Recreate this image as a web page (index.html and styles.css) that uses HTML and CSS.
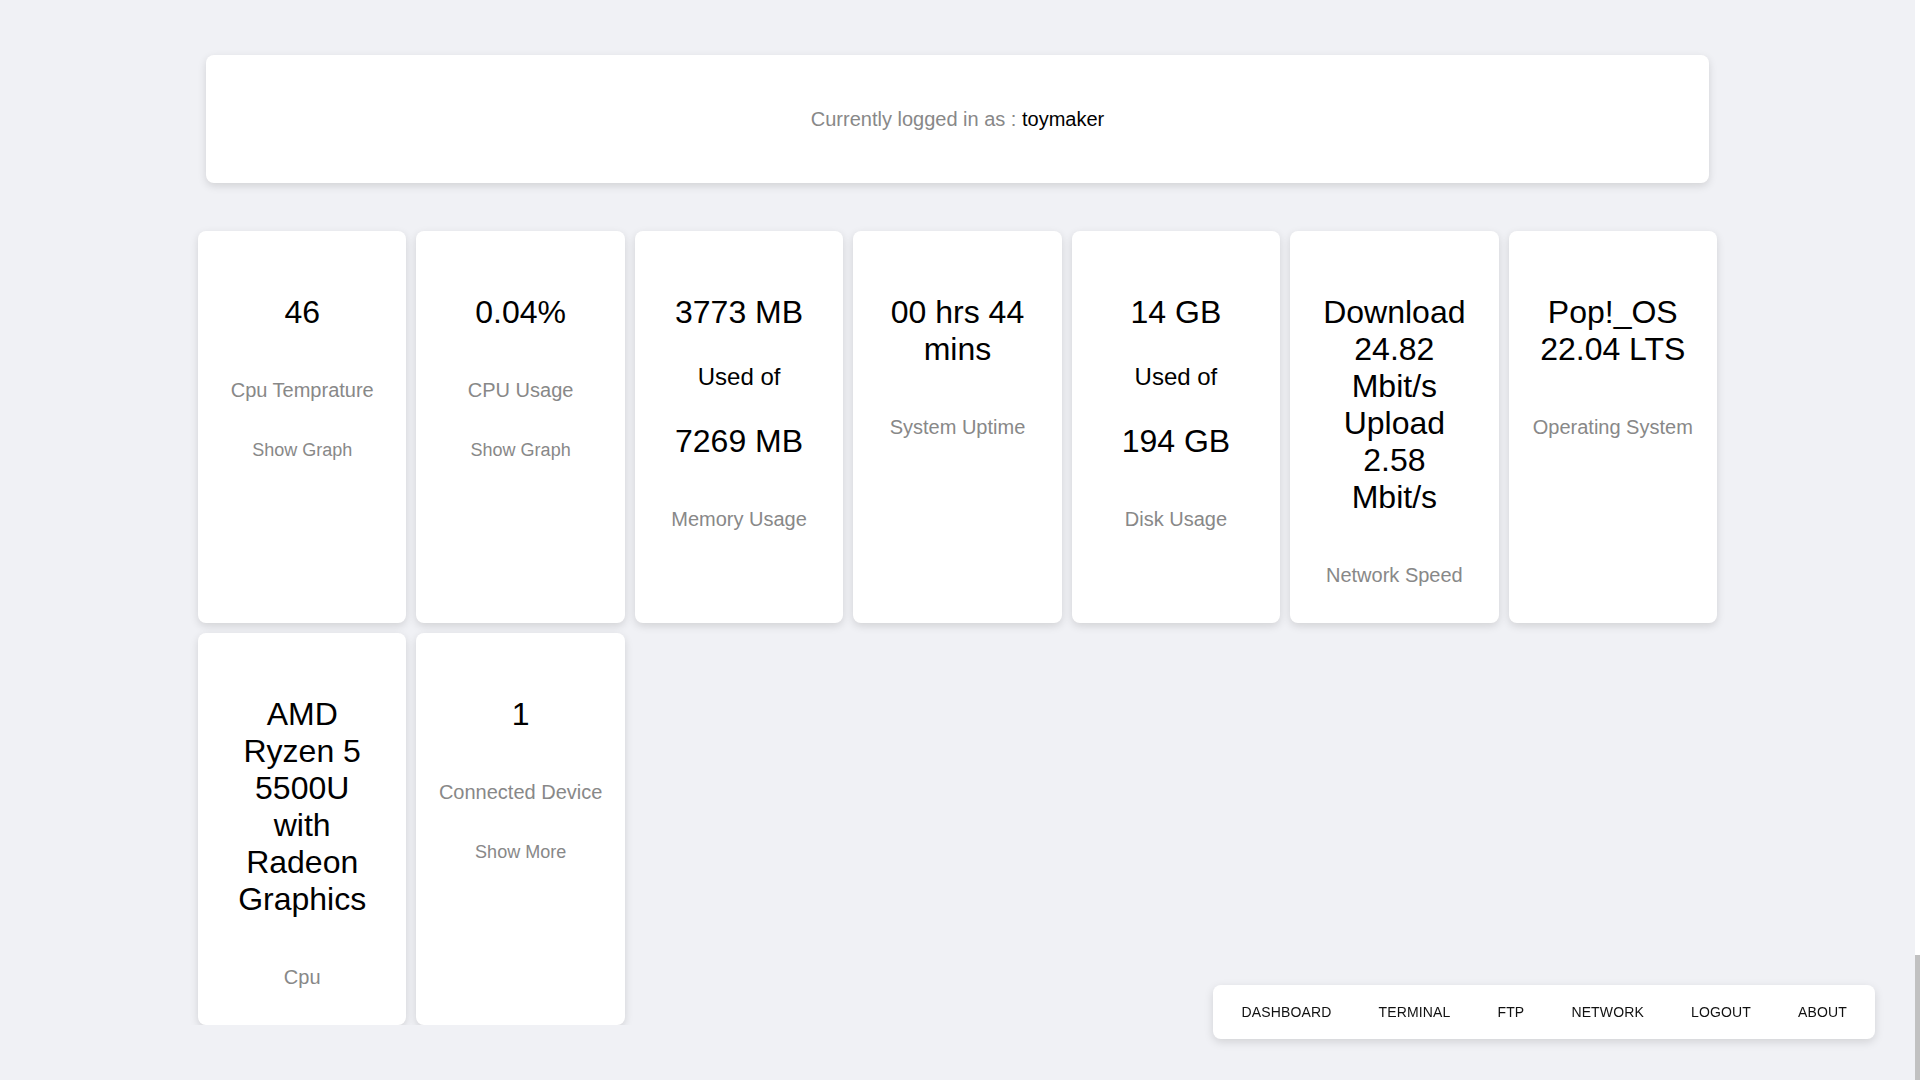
FILE: index.html
```html
<!DOCTYPE html>
<html lang="en">
<head>
<meta charset="utf-8">
<title>Dashboard</title>
<link rel="stylesheet" href="styles.css">
</head>
<body>
<div class="page">
  <div class="header-card">
    <span>Currently logged in as :&nbsp;</span><span class="user">toymaker</span>
  </div>

  <div class="grid">
    <div class="card">
      <div class="value">46</div>
      <div class="label">Cpu Temprature</div>
      <a class="link" href="#">Show Graph</a>
    </div>
    <div class="card">
      <div class="value">0.04%</div>
      <div class="label">CPU Usage</div>
      <a class="link" href="#">Show Graph</a>
    </div>
    <div class="card">
      <div class="value">3773 MB</div>
      <div class="sub">Used of</div>
      <div class="value">7269 MB</div>
      <div class="label">Memory Usage</div>
    </div>
    <div class="card">
      <div class="value">00 hrs 44 mins</div>
      <div class="label">System Uptime</div>
    </div>
    <div class="card">
      <div class="value">14 GB</div>
      <div class="sub">Used of</div>
      <div class="value">194 GB</div>
      <div class="label">Disk Usage</div>
    </div>
    <div class="card">
      <div class="value">Download 24.82 Mbit/s Upload 2.58 Mbit/s</div>
      <div class="label">Network Speed</div>
    </div>
    <div class="card">
      <div class="value">Pop!_OS 22.04 LTS</div>
      <div class="label">Operating System</div>
    </div>
    <div class="card">
      <div class="value">AMD Ryzen 5 5500U with Radeon Graphics</div>
      <div class="label">Cpu</div>
    </div>
    <div class="card">
      <div class="value">1</div>
      <div class="label">Connected Device</div>
      <a class="link" href="#">Show More</a>
    </div>
  </div>
</div>

<nav class="bottom-nav">
  <a href="#">Dashboard</a>
  <a href="#">Terminal</a>
  <a href="#">FTP</a>
  <a href="#">Network</a>
  <a href="#">Logout</a>
  <a href="#">About</a>
</nav>

<div class="scrollbar"><div class="thumb"></div></div>
</body>
</html>
```

FILE: styles.css
```css
html, body {
  margin: 0;
  padding: 0;
}

body {
  background: #f0f1f5;
  font-family: "Liberation Sans", Arial, sans-serif;
  color: #000;
  overflow: hidden;
}

.page {
  width: 1915px;
  padding-top: 55px;
}

.header-card {
  margin-left: 206px;
  width: 1503px;
  height: 128px;
  box-sizing: border-box;
  background: #fff;
  border-radius: 8px;
  box-shadow: 0 3px 8px rgba(0, 0, 0, 0.13);
  display: flex;
  align-items: center;
  justify-content: center;
  font-size: 20px;
  color: #888;
}

.user {
  color: #000;
}

.grid {
  margin: 48px 0 0 198px;
  width: 1519px;
  display: grid;
  grid-template-columns: repeat(7, 1fr);
  gap: 10px;
}

.card {
  height: 392px;
  box-sizing: border-box;
  padding-top: 63px;
  background: #fff;
  border-radius: 8px;
  box-shadow: 0 3px 8px rgba(0, 0, 0, 0.13);
  display: flex;
  flex-direction: column;
  align-items: center;
  text-align: center;
}

.value {
  width: 152px;
  font-size: 32px;
  line-height: normal;
}

.sub {
  margin-top: 31.5px;
  font-size: 24px;
}

.sub + .value {
  margin-top: 32.5px;
}

.label {
  margin-top: 48px;
  font-size: 20px;
  color: #888;
}

.link {
  margin-top: 38px;
  font-size: 18px;
  color: #888;
  text-decoration: none;
}

.bottom-nav {
  position: fixed;
  right: 45px;
  bottom: 41px;
  height: 54px;
  padding: 0 4.5px;
  display: flex;
  align-items: center;
  background: #fff;
  border-radius: 8px;
  box-shadow: 0 3px 10px rgba(0, 0, 0, 0.13);
}

.bottom-nav a {
  padding: 0 23.5px;
  font-size: 14px;
  letter-spacing: 0.15px;
  text-transform: uppercase;
  color: #111;
  text-decoration: none;
}

.scrollbar {
  position: fixed;
  top: 0;
  right: 0;
  width: 5px;
  height: 100vh;
  background: #fff;
}

.thumb {
  position: absolute;
  left: 0;
  bottom: 0;
  width: 100%;
  height: 125px;
  background: #c1c1c1;
}
```
